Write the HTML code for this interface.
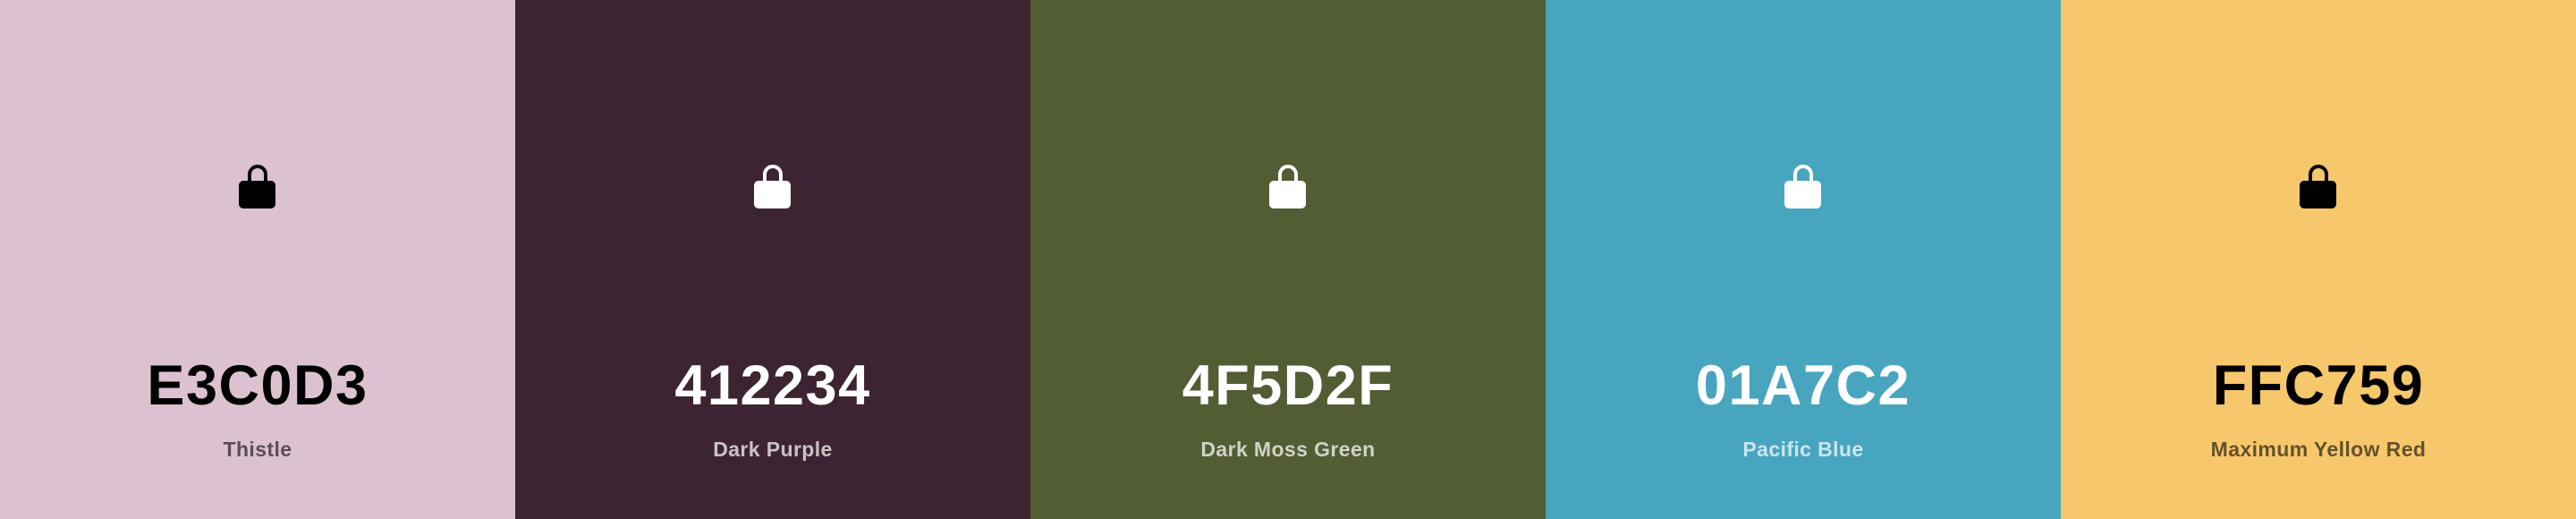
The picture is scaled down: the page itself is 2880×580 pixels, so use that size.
<!DOCTYPE html>
<html><head><meta charset="utf-8"><style>
html,body{margin:0;padding:0;width:2880px;height:580px;overflow:hidden}
body{display:flex;font-family:"Liberation Sans",sans-serif}
.p{width:576px;height:580px;position:relative}
.p svg{position:absolute;left:266px;top:182px}
.h{position:absolute;left:0;right:0;top:394px;text-align:center;font-size:63px;font-weight:bold;letter-spacing:1.5px;line-height:74px}
.n{position:absolute;left:0;right:0;top:489px;text-align:center;font-size:23px;font-weight:bold;letter-spacing:0.4px;line-height:26px}
.d{color:#000}.d .n{color:rgba(0,0,0,.6)}
.l{color:#fff}.l .n{color:rgba(255,255,255,.72)}
</style></head><body>
<div class="p d" style="background:#dcc2d1"><svg width="44" height="54" viewBox="0 0 44 54"><path d="M13 20V13a9 9 0 0 1 18 0v7" fill="none" stroke="#000" stroke-width="4"/><rect x="1" y="20" width="41" height="31" rx="5" fill="#000"/></svg><div class="h">E3C0D3</div><div class="n">Thistle</div></div>
<div class="p l" style="background:#3d2433"><svg width="44" height="54" viewBox="0 0 44 54"><path d="M13 20V13a9 9 0 0 1 18 0v7" fill="none" stroke="#fff" stroke-width="4"/><rect x="1" y="20" width="41" height="31" rx="5" fill="#fff"/></svg><div class="h">412234</div><div class="n">Dark Purple</div></div>
<div class="p l" style="background:#525d33"><svg width="44" height="54" viewBox="0 0 44 54"><path d="M13 20V13a9 9 0 0 1 18 0v7" fill="none" stroke="#fff" stroke-width="4"/><rect x="1" y="20" width="41" height="31" rx="5" fill="#fff"/></svg><div class="h">4F5D2F</div><div class="n">Dark Moss Green</div></div>
<div class="p l" style="background:#47a5bf"><svg width="44" height="54" viewBox="0 0 44 54"><path d="M13 20V13a9 9 0 0 1 18 0v7" fill="none" stroke="#fff" stroke-width="4"/><rect x="1" y="20" width="41" height="31" rx="5" fill="#fff"/></svg><div class="h">01A7C2</div><div class="n">Pacific Blue</div></div>
<div class="p d" style="background:#f7c76b"><svg width="44" height="54" viewBox="0 0 44 54"><path d="M13 20V13a9 9 0 0 1 18 0v7" fill="none" stroke="#000" stroke-width="4"/><rect x="1" y="20" width="41" height="31" rx="5" fill="#000"/></svg><div class="h">FFC759</div><div class="n">Maximum Yellow Red</div></div>
</body></html>
